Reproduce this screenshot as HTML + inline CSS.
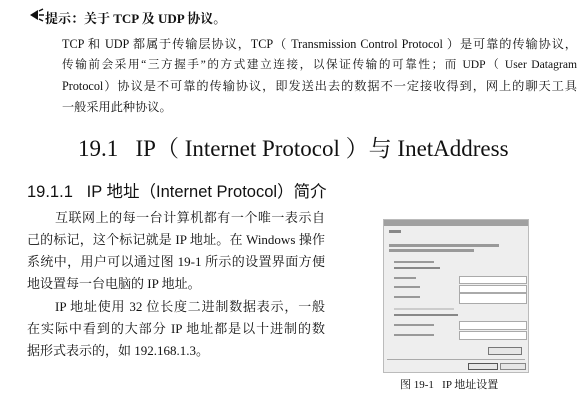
<!DOCTYPE html>
<html><head><meta charset="utf-8"><style>
html,body{margin:0;padding:0;background:#fff;width:585px;height:415px;overflow:hidden;position:relative;color:#111}
.s{font-family:"Liberation Serif","Noto Serif CJK SC",serif;position:absolute;white-space:nowrap}
.ss{font-family:"Liberation Sans","Noto Sans CJK SC",sans-serif;position:absolute;white-space:nowrap}
.j{white-space:normal;text-align:justify;text-align-last:justify}
.p{font-size:12.2px;left:62px;width:515px}
.q{font-size:13px}
.d{position:absolute}
</style></head><body>
<svg style="position:absolute;left:29px;top:8px" width="17" height="14" viewBox="0 0 17 14"><path d="M1 7 L9 2 L9 12 Z" fill="#111"/><path d="M10 3 L14 1 M10 7 L15 7 M10 11 L14 13" stroke="#111" stroke-width="1.5"/></svg>
<div class="s" style="left:45px;top:8px;font-size:13px;font-weight:bold">提示：关于 TCP 及 UDP 协议。</div>
<div class="s p j" style="top:35px">TCP 和 UDP 都属于传输层协议，TCP（ Transmission Control Protocol ）是可靠的传输协议，</div>
<div class="s p j" style="top:56px;font-size:11.6px">传输前会采用“三方握手”的方式建立连接，以保证传输的可靠性；而 UDP（ User Datagram</div>
<div class="s p j" style="top:77px">Protocol）协议是不可靠的传输协议，即发送出去的数据不一定接收得到，网上的聊天工具</div>
<div class="s p" style="top:98px;width:auto">一般采用此种协议。</div>
<div class="s" style="left:78px;top:130px;font-size:23px">19.1&nbsp;&nbsp;&nbsp;IP（ Internet Protocol ）与 InetAddress</div>
<div class="ss" style="left:27px;top:178px;font-size:16.5px">19.1.1&nbsp;&nbsp;&nbsp;IP 地址（Internet Protocol）简介</div>
<div class="s q j" style="left:55px;width:270px;top:207px">互联网上的每一台计算机都有一个唯一表示自</div>
<div class="s q j" style="left:27px;width:298px;top:229px">己的标记，这个标记就是 IP 地址。在 Windows 操作</div>
<div class="s q j" style="left:27px;width:298px;top:251px">系统中，用户可以通过图 19-1 所示的设置界面方便</div>
<div class="s q" style="left:27px;top:273px">地设置每一台电脑的 IP 地址。</div>
<div class="s q j" style="left:55px;width:270px;top:296px">IP 地址使用 32 位长度二进制数据表示，一般</div>
<div class="s q j" style="left:27px;width:298px;top:318px">在实际中看到的大部分 IP 地址都是以十进制的数</div>
<div class="s q" style="left:27px;top:340px">据形式表示的，如 192.168.1.3。</div>
<div style="position:absolute;left:383px;top:219px;width:144px;height:152px;background:#eeeeee;border:1px solid #bbb">
<div style="height:6px;background:#a0a0a0"></div>
<div class="d" style="left:5px;top:10px;width:12px;height:3px;background:#888"></div>
<div class="d" style="left:5px;top:24px;width:110px;height:3px;background:#999"></div>
<div class="d" style="left:5px;top:29px;width:85px;height:3px;background:#999"></div>
<div class="d" style="left:10px;top:41px;width:40px;height:2px;background:#999"></div>
<div class="d" style="left:10px;top:47px;width:46px;height:2px;background:#888"></div>
<div class="d" style="left:10px;top:57px;width:22px;height:2px;background:#999"></div>
<div class="d" style="left:10px;top:66px;width:26px;height:2px;background:#999"></div>
<div class="d" style="left:10px;top:76px;width:26px;height:2px;background:#999"></div>
<div class="d" style="left:75px;top:56px;width:66px;height:6px;background:#fff;border:1px solid #aaa"></div>
<div class="d" style="left:75px;top:65px;width:66px;height:6px;background:#fff;border:1px solid #aaa"></div>
<div class="d" style="left:75px;top:73px;width:66px;height:9px;background:#fff;border:1px solid #aaa"></div>
<div class="d" style="left:10px;top:88px;width:60px;height:2px;background:#ccc"></div>
<div class="d" style="left:10px;top:94px;width:64px;height:2px;background:#888"></div>
<div class="d" style="left:10px;top:104px;width:40px;height:2px;background:#999"></div>
<div class="d" style="left:10px;top:114px;width:40px;height:2px;background:#999"></div>
<div class="d" style="left:75px;top:101px;width:66px;height:7px;background:#fff;border:1px solid #aaa"></div>
<div class="d" style="left:75px;top:111px;width:66px;height:7px;background:#fff;border:1px solid #aaa"></div>
<div class="d" style="left:104px;top:127px;width:32px;height:6px;border:1px solid #777;background:#e6e6e6"></div>
<div class="d" style="left:3px;top:139px;width:138px;height:1px;background:#aaa"></div>
<div class="d" style="left:84px;top:143px;width:28px;height:5px;border:1px solid #555;background:#e6e6e6"></div>
<div class="d" style="left:116px;top:143px;width:24px;height:5px;border:1px solid #888;background:#e6e6e6"></div>
</div>
<div class="s" style="left:400px;top:376px;font-size:11px">图 19-1&nbsp;&nbsp;&nbsp;IP 地址设置</div>
</body></html>
